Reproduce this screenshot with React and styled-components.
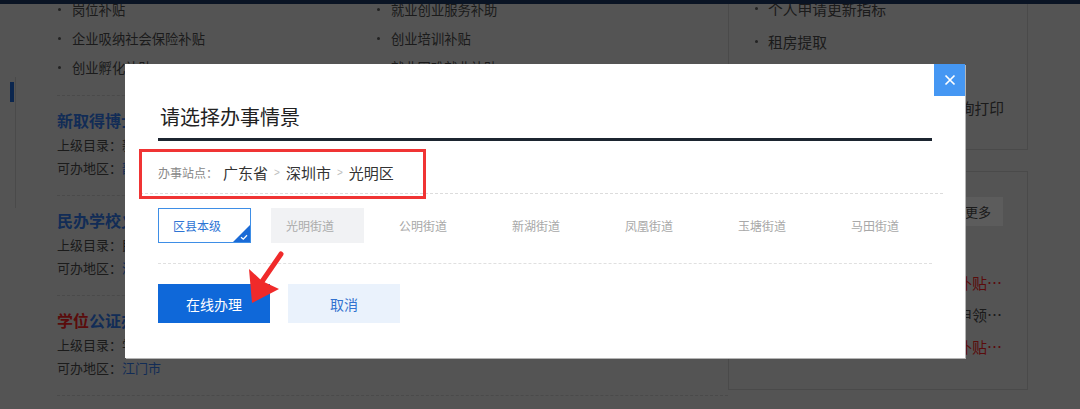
import React from 'react';
import styled, { createGlobalStyle } from 'styled-components';

const Global = createGlobalStyle`
  html, body { margin: 0; padding: 0; }
  body {
    background: #d2d2d2;
    font-family: "Noto Sans CJK SC", "Noto Sans", sans-serif;
    overflow: hidden;
  }
  * { box-sizing: border-box; }
`;

const Page = styled.div`
  position: relative;
  width: 1080px;
  height: 409px;
  overflow: hidden;
  background: #d2d2d2;
`;

const HeaderEdge = styled.div`
  position: absolute;
  top: 0;
  left: 0;
  right: 0;
  height: 4px;
  background: #19325a;
  z-index: 1;
`;

const Mask = styled.div`
  position: absolute;
  inset: 0;
  background: rgba(0, 0, 0, 0.6);
  z-index: 5;
`;

const Layout = styled.div`
  display: grid;
  grid-template-columns: 57px 671px 300px 1fr;
  margin-top: -5px;
`;

const SideCol = styled.div``;

const SideRail = styled.div`
  margin-top: 82px;
  width: 16px;
  height: 131px;
  border-right: 1px solid #b9b9b9;
  padding-top: 5px;
`;

const ActiveMark = styled.div`
  margin-left: 10px;
  width: 4px;
  height: 20px;
  background: #1d5fc4;
`;

const MainCol = styled.div``;

const BulletGrid = styled.ul`
  list-style: none;
  margin: 0;
  padding: 0 0 13px;
  display: grid;
  grid-template-columns: 319px 1fr;
  border-bottom: 1px dashed #b9b9b9;
`;

const Bullet = styled.li`
  display: flex;
  align-items: center;
  height: 29px;
  font-size: 13.3px;
  color: #444;
  white-space: nowrap;
  &::before {
    content: '';
    width: 3px;
    height: 3px;
    margin: 0 11px 0 1px;
    background: #555;
    border-radius: 50%;
  }
`;

const Service = styled.div`
  padding: 11px 0 16px;
  border-bottom: 1px dashed #b9b9b9;
`;

const ServiceTitle = styled.div`
  font-size: 16px;
  line-height: 26px;
  font-weight: 700;
  color: #2f6fd6;
  white-space: nowrap;
`;

const Hit = styled.span`
  color: #e02020;
`;

const Meta = styled.div`
  font-size: 13px;
  line-height: 23px;
  color: #444;
  white-space: nowrap;
`;

const MetaValue = styled.span`
  color: ${p => (p.$link ? '#2f6fd6' : '#444')};
`;

const RightCol = styled.div`
  margin-top: -3px;
`;

const Panel = styled.div`
  border: 1px solid #b9b9b9;
  border-top: ${p => (p.$open ? 'none' : '1px solid #b9b9b9')};
`;

const TopPanel = styled(Panel)`
  padding: 0 0 25px 26px;
`;

const PanelItem = styled.div`
  display: flex;
  align-items: center;
  height: 33px;
  font-size: 14.75px;
  color: #444;
  white-space: nowrap;
  &::before {
    content: '';
    width: 3px;
    height: 3px;
    margin-right: 10px;
    background: #555;
    border-radius: 50%;
  }
`;

const BottomPanel = styled(Panel)`
  margin-top: 21px;
  height: 219px;
  padding: 25px 24px 0 48px;
`;

const PanelHead = styled.div`
  display: flex;
  justify-content: flex-end;
`;

const MoreButton = styled.div`
  height: 29px;
  padding: 0 12px;
  display: flex;
  align-items: center;
  font-size: 13px;
  color: #444;
  background: #e6e6e6;
`;

const NewsList = styled.div`
  margin-top: 41px;
`;

const NewsItem = styled.div`
  height: 32px;
  line-height: 32px;
  font-size: 15px;
  color: ${p => (p.$hot ? '#e02020' : '#444')};
  white-space: nowrap;
  overflow: hidden;
  text-overflow: ellipsis;
`;

/* ---------- modal ---------- */

const Modal = styled.div`
  position: absolute;
  left: 125px;
  top: 64px;
  width: 840px;
  height: 294px;
  background: #fff;
  box-shadow: 1px 1px 0 #b4b4b4;
  z-index: 10;
  padding: 0 33px;
`;

const CloseButton = styled.button`
  position: absolute;
  top: 0;
  right: 0;
  width: 31px;
  height: 32px;
  border: none;
  padding: 0;
  background: #4597f3;
  display: flex;
  align-items: center;
  justify-content: center;
  cursor: pointer;
`;

const Title = styled.h2`
  margin: 39px 0 0;
  padding: 0 0 7px 2px;
  font-size: 20px;
  line-height: 28px;
  font-weight: 400;
  color: #222;
  border-bottom: 3px solid #1c2530;
`;

const SiteRow = styled.div`
  margin: 8px -11px 0 -18px;
  padding: 12px 0 8px 18px;
  display: flex;
  align-items: center;
  line-height: 24px;
  border-bottom: 1px dashed #dcdcdc;
`;

const SiteLabel = styled.span`
  font-size: 12px;
  color: #888;
  margin-right: 5px;
`;

const Place = styled.span`
  font-size: 15px;
  color: #333;
`;

const Sep = styled.span`
  font-family: "Liberation Sans", sans-serif;
  font-size: 10px;
  color: #bdbdbd;
  margin: 0 6px;
`;

const RedBox = styled.div`
  position: absolute;
  left: 14px;
  top: 85px;
  width: 287px;
  height: 50px;
  border: 3px solid #f03434;
  pointer-events: none;
`;

const Options = styled.div`
  display: flex;
  gap: 20px;
  margin-top: 14px;
  padding-bottom: 20px;
  border-bottom: 1px dashed #e0e0e0;
`;

const Option = styled.div`
  position: relative;
  width: 93px;
  height: 35px;
  display: flex;
  align-items: center;
  padding-left: ${p => (p.$active ? '14px' : '15px')};
  font-size: 12px;
  white-space: nowrap;
  color: ${p => (p.$active ? '#2e74d4' : p.$disabled ? '#ababab' : '#a8a8a8')};
  background: ${p => (p.$disabled ? '#f1f2f4' : '#fff')};
  border: ${p => (p.$active ? '1px solid #3e8ee6' : 'none')};
`;

const Corner = styled.svg`
  position: absolute;
  right: 0;
  bottom: 0;
`;

const Actions = styled.div`
  display: flex;
  gap: 18px;
  margin-top: 20px;
`;

const ActionButton = styled.button`
  width: 112px;
  height: 39px;
  border: none;
  padding: 0;
  font-family: inherit;
  font-size: 14px;
  color: ${p => (p.$primary ? '#fff' : '#3272cf')};
  background: ${p => (p.$primary ? '#0f68d9' : '#eaf2fc')};
  cursor: pointer;
`;

const Annotation = styled.svg`
  position: absolute;
  left: 0;
  top: 0;
  pointer-events: none;
`;

const streets = ['区县本级', '光明街道', '公明街道', '新湖街道', '凤凰街道', '玉塘街道', '马田街道'];

export default function App() {
  return (
    <Page>
      <Global />
      <HeaderEdge />
      <Layout>
        <SideCol>
          <SideRail>
            <ActiveMark />
          </SideRail>
        </SideCol>

        <MainCol>
          <BulletGrid>
            <Bullet>岗位补贴</Bullet>
            <Bullet>就业创业服务补助</Bullet>
            <Bullet>企业吸纳社会保险补贴</Bullet>
            <Bullet>创业培训补贴</Bullet>
            <Bullet>创业孵化补贴</Bullet>
            <Bullet>就业困难就业补贴</Bullet>
          </BulletGrid>

          <Service>
            <ServiceTitle>新取得博士学位人员生活补贴</ServiceTitle>
            <Meta>上级目录：<MetaValue>新取得博士学位人员生活补贴</MetaValue></Meta>
            <Meta>可办地区：<MetaValue $link>韶关市</MetaValue></Meta>
          </Service>
          <Service>
            <ServiceTitle>民办学校义务教育阶段学位补贴</ServiceTitle>
            <Meta>上级目录：<MetaValue>民办学校义务教育学位补贴</MetaValue></Meta>
            <Meta>可办地区：<MetaValue $link>深圳市</MetaValue></Meta>
          </Service>
          <Service>
            <ServiceTitle><Hit>学位</Hit>公证办理</ServiceTitle>
            <Meta>上级目录：<MetaValue>学位公证</MetaValue></Meta>
            <Meta>可办地区：<MetaValue $link>江门市</MetaValue></Meta>
          </Service>
        </MainCol>

        <RightCol>
          <TopPanel $open>
            <PanelItem>个人申请更新指标</PanelItem>
            <PanelItem>租房提取</PanelItem>
            <PanelItem>公积金贷款</PanelItem>
            <PanelItem>公积金个人缴存及使用证明查询打印</PanelItem>
          </TopPanel>
          <BottomPanel>
            <PanelHead>
              <MoreButton>更多</MoreButton>
            </PanelHead>
            <NewsList>
              <NewsItem $hot>新引进博士后人员生活科研补贴资助</NewsItem>
              <NewsItem>就业困难人员社会保险补贴申领审核</NewsItem>
              <NewsItem $hot>离校未就业高校毕业生求职补贴发放</NewsItem>
            </NewsList>
          </BottomPanel>
        </RightCol>
        <div />
      </Layout>

      <Mask />

      <Modal>
        <CloseButton aria-label="关闭">
          <svg width="12" height="12" viewBox="0 0 12 12">
            <path d="M1.5 1.5 L10.5 10.5 M10.5 1.5 L1.5 10.5" stroke="#fff" strokeWidth="1.7" />
          </svg>
        </CloseButton>

        <Title>请选择办事情景</Title>

        <SiteRow>
          <SiteLabel>办事站点：</SiteLabel>
          <Place>广东省</Place>
          <Sep>&gt;</Sep>
          <Place>深圳市</Place>
          <Sep>&gt;</Sep>
          <Place>光明区</Place>
        </SiteRow>

        <Options>
          {streets.map((s, i) => (
            <Option key={s} $active={i === 0} $disabled={i === 1}>
              {s}
              {i === 0 && (
                <Corner width="17" height="17" viewBox="0 0 17 17">
                  <polygon points="17,0 17,17 0,17" fill="#1a6ad6" />
                  <polyline points="8,12.2 10.3,14.2 14,10.3" fill="none" stroke="#fff" strokeWidth="1.3" />
                </Corner>
              )}
            </Option>
          ))}
        </Options>

        <Actions>
          <ActionButton $primary>在线办理</ActionButton>
          <ActionButton>取消</ActionButton>
        </Actions>

        <RedBox />
        <Annotation width="840" height="294" viewBox="0 0 840 294">
          <line x1="156" y1="190" x2="136" y2="219" stroke="#f02a2a" strokeWidth="5" strokeLinecap="round" />
          <polygon points="127,239 124,205 137,217 154,225" fill="#f02a2a" />
        </Annotation>
      </Modal>
    </Page>
  );
}
